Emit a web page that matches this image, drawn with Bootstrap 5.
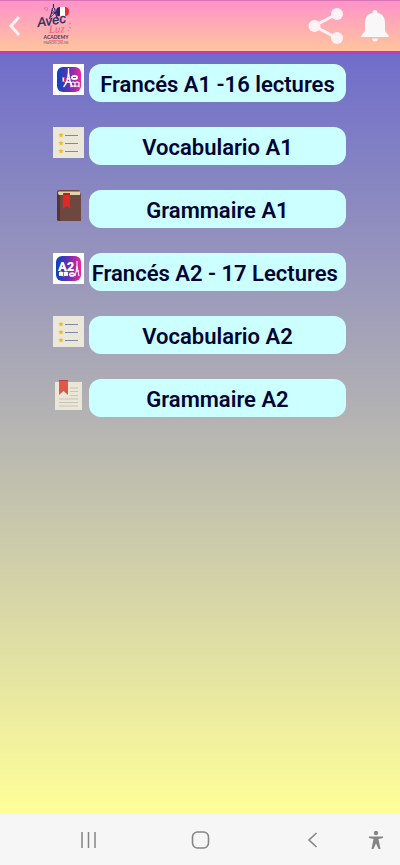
<!DOCTYPE html>
<html lang="es">
<head>
<meta charset="utf-8">
<meta name="viewport" content="width=device-width, initial-scale=1">
<title>Avec Luz Academy</title>
<link href="https://cdn.jsdelivr.net/npm/bootstrap@5.3.0/dist/css/bootstrap.min.css" rel="stylesheet">
<style>
  body { font-family: Roboto, "Liberation Sans", sans-serif; background: #f6f6f6; }
  .app-header { height: 54px; background: linear-gradient(#ff93cb, #ffc59c); border-top: 1px solid #d873b4; border-bottom: 3px solid #c03cba; }
  .app-main { background: linear-gradient(#6f6dca, #ffff99); padding: 10px 54px 0 53px; }
  .lessons { gap: 25px; }
  .lesson { gap: 5px; }
  .lesson svg { width: 31px; height: 31px; }
  .lesson-btn { height: 38px; border-radius: 12px; background: #ccffff; color: #030335; font-size: 22px; font-weight: 600; line-height: 38px; padding: 2px 0 0; white-space: pre; }
  .lesson-btn:hover { background: #b8f4f4; color: #030335; }
  .icon-btn { line-height: 0; }
  .back { margin-left: 8px; }
  .logo { margin-left: 13px; }
  .actions { gap: 17px; padding-right: 11px; }
  .system-bar { height: 51px; padding-right: 17px; }
  .system-bar .recent { margin-left: 80px; }
  .system-bar .home { margin-left: 94px; }
  .system-bar .prev { margin-left: 97px; }
  .system-bar .access { margin-left: 49px; }
</style>
<script src="https://cdn.jsdelivr.net/npm/bootstrap@5.3.0/dist/js/bootstrap.bundle.min.js"></script>
</head>
<body class="min-vh-100 d-flex flex-column">

<header class="app-header d-flex align-items-center">
  <button type="button" class="btn p-0 border-0 icon-btn back" aria-label="Volver">
    <svg width="14" height="22" viewBox="0 0 14 22" fill="none" stroke="#fff0f5" stroke-width="3"><path d="M11 2 3 11l8 9"/></svg>
  </button>
  <a href="#" class="logo icon-btn" aria-label="Avec Luz Academy">
    <svg width="40" height="46" viewBox="0 0 40 46" font-family="Lato, sans-serif">
      <g fill="none" stroke="#29285e">
        <path d="M18.500 1v4M17.500 5l-1 5-2 6M19.500 5l1 5 2 6M16 10h5" stroke-width="1.100"/>
        <path d="M17 7l3 3-4 4" stroke-width=".7"/>
      </g>
      <path d="M25 4q-4 0-4 5t4 4z" fill="#282968"/><path d="M25 4h5v9h-5z" fill="#fff"/><path d="M30 4q4 0 4 4.500T30 13z" fill="#ed2939"/>
      <path d="M12 8 9.500 6q-1-2 1-1 1-2 2 0zM34 21l2-1M34 24l2 1M33 27l1 1" fill="none" stroke="#ee6799" stroke-width=".8"/>
      <text x="3" y="24" font-family="Liberation Sans, sans-serif" font-size="13" font-style="italic" fill="#29285e" stroke="#29285e" stroke-width=".3" transform="rotate(-9 3 24)">Avec</text>
      <text x="14" y="30" font-family="Liberation Serif, serif" font-size="11" font-style="italic" fill="#ee5689" transform="rotate(-3 14 30)">Luz</text>
      <text x="21" y="36" font-size="5" font-weight="bold" text-anchor="middle" fill="#44345f">ACADEMY</text>
      <path d="M14 37.500h14" stroke="#e45e86" stroke-width=".6"/>
      <text x="21" y="41" font-size="3" text-anchor="middle" fill="#805879">FRANCÉS ONLINE</text>
    </svg>
  </a>
  <div class="actions d-flex align-items-center ms-auto">
    <button type="button" class="btn p-0 border-0 icon-btn" aria-label="Compartir">
      <svg width="36" height="38" viewBox="0 0 36 38" fill="#fff1f4"><path d="M29 7 6 19l23 12" fill="none" stroke="#fff1f4" stroke-width="3"/><circle cx="6.500" cy="19" r="6"/><circle cx="29" cy="7" r="6"/><circle cx="29" cy="31" r="6"/></svg>
    </button>
    <button type="button" class="btn p-0 border-0 icon-btn" aria-label="Notificaciones">
      <svg width="28" height="34" viewBox="0 0 28 34" fill="#f8f8f8"><path d="M14 1c2 0 2.500 1.500 2.500 3C22 5 24 9 24 14v7c0 3 3 3 4 7H0c1-4 4-4 4-7v-7C4 9 6 5 11.500 4c0-1.500.5-3 2.500-3zM11 29.500h6c0 4-6 4-6 0z"/></svg>
    </button>
  </div>
</header>

<main class="app-main flex-grow-1">
  <nav class="lessons d-flex flex-column" aria-label="Lecciones">
    <div class="lesson d-flex align-items-start">
      <svg viewBox="0 0 31 31" aria-hidden="true">
        <defs><linearGradient id="blend"><stop offset=".1" stop-color="#1641bd"/><stop offset=".5" stop-color="#6630b5"/><stop offset="1" stop-color="#f22399"/></linearGradient></defs>
        <path fill="#fff" d="M0 0h31v31H0z"/><rect x="4" y="3" width="24" height="25" rx="6" fill="url(#blend)"/>
        <g fill="none" stroke="#fff"><path d="M15.500 4v4l-1 7q-1 5-4 8M15.500 8l1 7q1 5 3 8M13.500 15h4M12 19q3-2 6 0" stroke-width="1.300"/><path d="M18 18.500q2-1 4 0 2-1 4 0v4q-2-1-4 0-2-1-4 0zM22 18v5" stroke-width="1.200"/></g>
        <ellipse cx="21.500" cy="13.500" rx="3.500" ry="2.500" fill="#fff"/><path d="M20 13.500h3" stroke="#8a35b2"/>
        <path fill="#fff" d="M8 13l5 1v4l-5-1z"/><path fill="#20389b" d="M8 13l1.500.3v4L8 17z"/><path fill="#ed2939" d="M11 13.600l2 .4v4l-2-.4z"/>
      </svg>
      <a href="#" class="btn border-0 lesson-btn flex-grow-1">Francés A1 -16 lectures</a>
    </div>
    <div class="lesson d-flex align-items-start">
      <svg viewBox="0 0 31 31" aria-hidden="true">
        <defs>
          <path id="star" d="m0-2.600.8 1.700 1.800.2L1.300.6l.4 1.900L0 1.600l-1.700.9.400-1.900-1.300-1.300 1.800-.2z"/>
          <g id="list"><path fill="#ece8d9" d="M0 0h31v31H0z"/><g fill="#eebc28"><use href="#star" x="8" y="8"/><use href="#star" x="8" y="16"/><use href="#star" x="8" y="24"/></g><path d="M12 8.500h13M12 16.500h13M12 24.500h13" stroke="#8087ab" stroke-width="1.200"/></g>
        </defs>
        <use href="#list"/>
      </svg>
      <a href="#" class="btn border-0 lesson-btn flex-grow-1">Vocabulario A1</a>
    </div>
    <div class="lesson d-flex align-items-start">
      <svg viewBox="0 0 31 31" aria-hidden="true">
        <path fill="#6d4740" d="M4 2q0-2 2-2h20l2 5v26H6q-2 0-2-2z"/><path fill="#57352f" d="M4 3h3v28H6q-2 0-2-2z"/>
        <path fill="#e5d2ad" d="M6 1h21v4H6Q4 3 6 1z"/><path d="M5 1h22" stroke="#714a3d"/><path fill="#df2925" d="M10 3h7v16l-3-3-4 3z"/><path fill="#b91f22" d="M11 3h6v2h-7z"/>
      </svg>
      <a href="#" class="btn border-0 lesson-btn flex-grow-1">Grammaire A1</a>
    </div>
    <div class="lesson d-flex align-items-start">
      <svg viewBox="0 0 31 31" aria-hidden="true">
        <path fill="#fff" d="M0 0h31v31H0z"/><rect x="3" y="3" width="25" height="25" rx="6" fill="url(#blend)"/>
        <text x="5" y="18" font-family="Roboto, sans-serif" font-size="13" font-weight="900" fill="#fff">A2</text>
        <g fill="none" stroke="#fff"><path d="M24 8v5l-1 6-1 4M24 13l1 5 1 5M23 18h3" stroke-width="1"/></g><path d="M6 19q2.500-1 4.500.5 2-1.500 4.500-.5v4q-2.500-.5-4.500.5-2-1-4.500-.5z" fill="#fff"/><path d="M10.500 19.500v4" stroke="#3a39b8" stroke-width=".7"/><ellipse cx="19" cy="21.500" rx="3" ry="2.300" fill="#fff"/><path d="M17.500 21.500h3" stroke="#9a35ad" stroke-width=".7"/>
      </svg>
      <a href="#" class="btn border-0 lesson-btn flex-grow-1">Francés A2 - 17 Lectures </a>
    </div>
    <div class="lesson d-flex align-items-start">
      <svg viewBox="0 0 31 31" aria-hidden="true"><use href="#list"/></svg>
      <a href="#" class="btn border-0 lesson-btn flex-grow-1">Vocabulario A2</a>
    </div>
    <div class="lesson d-flex align-items-start">
      <svg viewBox="0 0 31 31" aria-hidden="true">
        <path fill="#ebe7d7" d="M2 3h27v28H2z"/><path d="M17 9h8M17 12.500h8M17 16.500h8M6 20h19M6 23.500h19M6 27h19" stroke="#c9c4b6" stroke-width="1.100"/><path fill="#dd574b" d="M6 1h9v15l-4.500-4L6 16z"/><path fill="#b9423e" d="M6 1h9v1H6z"/>
      </svg>
      <a href="#" class="btn border-0 lesson-btn flex-grow-1">Grammaire A2</a>
    </div>
  </nav>
</main>

<footer class="system-bar d-flex align-items-center">
  <button type="button" class="btn p-0 border-0 icon-btn recent" aria-label="Recientes"><svg width="17" height="16" viewBox="0 0 17 16" stroke="#858585" stroke-width="1.500"><path d="M2 0v16M8.500 0v16M15 0v16"/></svg></button>
  <button type="button" class="btn p-0 border-0 icon-btn home" aria-label="Inicio"><svg width="19" height="18" viewBox="0 0 19 18" fill="none" stroke="#858585" stroke-width="1.600"><rect x="1.500" y="1" width="16" height="16" rx="5"/></svg></button>
  <button type="button" class="btn p-0 border-0 icon-btn prev" aria-label="Atrás"><svg width="12" height="16" viewBox="0 0 12 16" fill="none" stroke="#858585" stroke-width="1.600"><path d="M9.500 1 2 8l7.500 7"/></svg></button>
  <button type="button" class="btn p-0 border-0 icon-btn access" aria-label="Accesibilidad"><svg width="16" height="20" viewBox="0 0 16 20" fill="#858585"><circle cx="8" cy="3" r="2.200"/><path d="M1 6.500h14v1.600l-4.500 1L12.500 19h-2L8 13.500 5.500 19h-2l2-9.900L1 8.100z"/></svg></button>
</footer>
</body>
</html>
